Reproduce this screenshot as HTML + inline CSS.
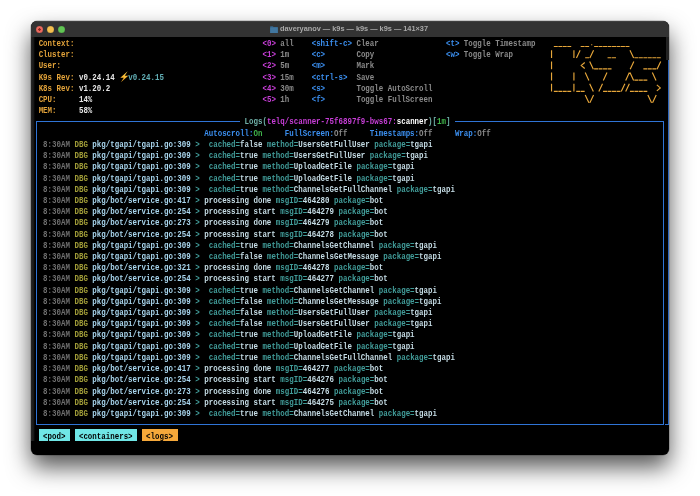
<!DOCTYPE html>
<html><head><meta charset="utf-8"><style>
html,body{margin:0;padding:0;width:700px;height:496px;overflow:hidden;background:#ffffff;}
body{position:relative;font-family:"Liberation Mono",monospace;}
#win{position:absolute;left:31px;top:21px;width:638px;height:433.5px;border-radius:6px;background:#000;
 box-shadow:0 0 0 0.5px rgba(0,0,0,0.3), 0 12px 23px rgba(0,0,0,0.68);overflow:hidden;}
#tb{position:absolute;left:0;top:0;width:638px;height:16px;background:#333333;box-shadow:inset 0 0.6px 0 rgba(255,255,255,0.12);}
.dot{position:absolute;top:4.9px;width:7px;height:7px;border-radius:50%;}
#title{position:absolute;left:249.2px;top:0;height:16px;line-height:16px;white-space:nowrap;color:#a9a9a9;
 font-family:"Liberation Sans",sans-serif;font-size:7.35px;font-weight:bold;will-change:transform;}
#txt{position:absolute;left:0;top:0;width:700px;height:496px;will-change:transform;}
.t{position:absolute;white-space:pre;height:11.20px;line-height:11.20px;font-size:7.46px;font-weight:bold;letter-spacing:0.000px;transform:scaleY(1.160);transform-origin:0 7.00px;}
.ln{position:absolute;}
.org{color:#e3a33a}
.wht{color:#e6e6e6}
.gry{color:#8a8a8a}
.mag{color:#c83ed8}
.blu{color:#3b8ff0}
.teal{color:#419c99}
.grn{color:#3fb34a}
.dbg{color:#a09c38}
.path{color:#a9d6ee}
.logo{color:#e3a33a}
.ts{color:#707070}
.ver{color:#62afb6}
.lgt{color:#6fb0a8}
.msg{color:#c4dbe4}
.blk{color:#000000}
.whb{color:#ffffff}
</style></head><body>
<div id="win">
<div id="tb"></div>
<div class="dot" style="left:4.8px;background:radial-gradient(circle at 50% 50%,#8c2a22 0,#8c2a22 1px,#ec6a5f 1.5px);box-shadow:inset 0 0 0 0.5px rgba(0,0,0,0.15)"></div>
<div class="dot" style="left:15.8px;background:#f4bf4f;box-shadow:inset 0 0 0 0.5px rgba(0,0,0,0.15)"></div>
<div class="dot" style="left:26.8px;background:#61c554;box-shadow:inset 0 0 0 0.5px rgba(0,0,0,0.15)"></div>
<div id="title">daveryanov — k9s — k9s — k9s — 141×37</div>
<svg class="ln" style="left:238px;top:3px" width="10" height="10"><path d="M1.2 2.2 h2.6 l0.8 0.9 h4.2 v6 h-7.6 z" fill="#35658c"/><path d="M1.2 3.6 h7.6 v5.5 h-7.6 z" fill="#41769f"/></svg>
</div>
<div class="ln" style="left:38.84px;top:429.20px;width:31.33px;height:11.60px;background:#6fe6e6"></div>
<div class="ln" style="left:74.64px;top:429.20px;width:62.66px;height:11.60px;background:#6fe6e6"></div>
<div class="ln" style="left:141.78px;top:429.20px;width:35.81px;height:11.60px;background:#f5a83a"></div>
<div class="ln" style="left:36.10px;top:121.00px;width:204.16px;height:1.00px;background:#2f74d6"></div>
<div class="ln" style="left:455.10px;top:121.00px;width:208.63px;height:1.00px;background:#2f74d6"></div>
<div class="ln" style="left:36.10px;top:423.60px;width:627.64px;height:1.00px;background:#2f74d6"></div>
<div class="ln" style="left:36.10px;top:121.00px;width:1.00px;height:303.60px;background:#2f74d6"></div>
<div class="ln" style="left:662.74px;top:121.00px;width:1.00px;height:303.60px;background:#2f74d6"></div>
<div class="ln" style="left:31px;top:37px;width:4px;height:404px;background:linear-gradient(90deg,#262626,#1a1a1a 60%,#000)"></div>
<div class="ln" style="left:666.00px;top:37.00px;width:3.00px;height:22.90px;background:#222222"></div>
<div class="ln" style="left:667.80px;top:59.90px;width:1.20px;height:364.70px;background:#2d66bd"></div>
<div class="ln" style="left:665.40px;top:423.60px;width:3.50px;height:1.00px;background:#2f74d6"></div>
<svg class="ln" style="left:0;top:0" width="700" height="496"><path d="M553.83 46.50H557.80M558.30 46.50H562.28M562.78 46.50H566.75M567.25 46.50H571.23M580.68 46.50H584.66M585.16 46.50H589.13M591.17 44.70h1.1M594.11 46.50H598.09M598.59 46.50H602.56M603.06 46.50H607.04M607.54 46.50H611.51M612.01 46.50H615.99M616.49 46.50H620.47M620.97 46.50H624.94M625.44 46.50H629.42M551.54 50.20V58.00M573.92 50.20V58.00M576.46 58.00L580.13 50.20M585.16 57.70H589.13M589.88 58.00L593.56 50.20M607.54 57.70H611.51M612.01 57.70H615.99M629.97 50.20L633.64 58.00M634.39 57.70H638.37M638.87 57.70H642.85M643.35 57.70H647.32M647.82 57.70H651.80M652.30 57.70H656.27M656.77 57.70H660.75M551.54 61.40V69.20M584.73 62.50L581.23 65.50L584.73 68.50M589.68 61.40L593.36 69.20M594.11 68.90H598.09M598.59 68.90H602.56M603.06 68.90H607.04M607.54 68.90H611.51M630.17 69.20L633.84 61.40M643.35 68.90H647.32M647.82 68.90H651.80M652.30 68.90H656.27M657.02 69.20L660.70 61.40M551.54 72.60V80.40M573.92 72.60V80.40M585.21 72.60L588.88 80.40M603.31 80.40L606.99 72.60M625.69 80.40L629.37 72.60M629.97 72.60L633.64 80.40M634.39 80.10H638.37M638.87 80.10H642.85M643.35 80.10H647.32M652.35 72.60L656.02 80.40M551.54 83.80V91.60M553.83 91.30H557.80M558.30 91.30H562.28M562.78 91.30H566.75M567.25 91.30H571.23M573.92 83.80V91.60M576.21 91.30H580.18M580.68 91.30H584.66M589.68 83.80L593.36 91.60M598.84 91.60L602.51 83.80M603.06 91.30H607.04M607.54 91.30H611.51M612.01 91.30H615.99M616.49 91.30H620.47M621.22 91.60L624.89 83.80M625.69 91.60L629.37 83.80M629.92 91.30H633.89M634.39 91.30H638.37M638.87 91.30H642.85M643.35 91.30H647.32M656.82 84.90L660.32 87.90L656.82 90.90M585.21 95.00L588.88 102.80M589.88 102.80L593.56 95.00M647.87 95.00L651.55 102.80M652.55 102.80L656.22 95.00" stroke="#e6a63a" stroke-width="1.15" fill="none"/></svg>
<div id="txt">
<div class="t org" style="left:38.64px;top:39.00px">Context:</div>
<div class="t org" style="left:38.64px;top:50.00px">Cluster:</div>
<div class="t org" style="left:38.64px;top:61.00px">User:</div>
<div class="t org" style="left:38.64px;top:73.00px">K9s Rev:</div>
<div class="t wht" style="left:78.92px;top:73.00px">v0.24.14</div>
<div class="t org" style="left:38.64px;top:84.00px">K8s Rev:</div>
<div class="t wht" style="left:78.92px;top:84.00px">v1.20.2</div>
<div class="t org" style="left:38.64px;top:95.00px">CPU:</div>
<div class="t wht" style="left:78.92px;top:95.00px">14%</div>
<div class="t org" style="left:38.64px;top:106.00px">MEM:</div>
<div class="t wht" style="left:78.92px;top:106.00px">58%</div>
<div class="t ver" style="left:128.16px;top:73.00px">v0.24.15</div>
<div class="t mag" style="left:262.44px;top:39.00px">&lt;0&gt;</div>
<div class="t gry" style="left:280.34px;top:39.00px">all</div>
<div class="t mag" style="left:262.44px;top:50.00px">&lt;1&gt;</div>
<div class="t gry" style="left:280.34px;top:50.00px">1m</div>
<div class="t mag" style="left:262.44px;top:61.00px">&lt;2&gt;</div>
<div class="t gry" style="left:280.34px;top:61.00px">5m</div>
<div class="t mag" style="left:262.44px;top:73.00px">&lt;3&gt;</div>
<div class="t gry" style="left:280.34px;top:73.00px">15m</div>
<div class="t mag" style="left:262.44px;top:84.00px">&lt;4&gt;</div>
<div class="t gry" style="left:280.34px;top:84.00px">30m</div>
<div class="t mag" style="left:262.44px;top:95.00px">&lt;5&gt;</div>
<div class="t gry" style="left:280.34px;top:95.00px">1h</div>
<div class="t blu" style="left:311.67px;top:39.00px">&lt;shift-c&gt;</div>
<div class="t gry" style="left:356.43px;top:39.00px">Clear</div>
<div class="t blu" style="left:311.67px;top:50.00px">&lt;c&gt;</div>
<div class="t gry" style="left:356.43px;top:50.00px">Copy</div>
<div class="t blu" style="left:311.67px;top:61.00px">&lt;m&gt;</div>
<div class="t gry" style="left:356.43px;top:61.00px">Mark</div>
<div class="t blu" style="left:311.67px;top:73.00px">&lt;ctrl-s&gt;</div>
<div class="t gry" style="left:356.43px;top:73.00px">Save</div>
<div class="t blu" style="left:311.67px;top:84.00px">&lt;s&gt;</div>
<div class="t gry" style="left:356.43px;top:84.00px">Toggle AutoScroll</div>
<div class="t blu" style="left:311.67px;top:95.00px">&lt;f&gt;</div>
<div class="t gry" style="left:356.43px;top:95.00px">Toggle FullScreen</div>
<div class="t blu" style="left:445.95px;top:39.00px">&lt;t&gt;</div>
<div class="t gry" style="left:463.86px;top:39.00px">Toggle Timestamp</div>
<div class="t blu" style="left:445.95px;top:50.00px">&lt;w&gt;</div>
<div class="t gry" style="left:463.86px;top:50.00px">Toggle Wrap</div>
<div class="t ts" style="left:43.11px;top:140.00px">8:30AM</div>
<div class="t dbg" style="left:74.44px;top:140.00px">DBG</div>
<div class="t path" style="left:92.35px;top:140.00px">pkg/tgapi/tgapi.go:309</div>
<div class="t teal" style="left:195.30px;top:140.00px">&gt;</div>
<div class="t teal" style="left:208.72px;top:140.00px">cached=</div>
<div class="t msg" style="left:240.06px;top:140.00px">false</div>
<div class="t teal" style="left:266.91px;top:140.00px">method=</div>
<div class="t msg" style="left:298.24px;top:140.00px">UsersGetFullUser</div>
<div class="t teal" style="left:374.34px;top:140.00px">package=</div>
<div class="t msg" style="left:410.14px;top:140.00px">tgapi</div>
<div class="t ts" style="left:43.11px;top:151.00px">8:30AM</div>
<div class="t dbg" style="left:74.44px;top:151.00px">DBG</div>
<div class="t path" style="left:92.35px;top:151.00px">pkg/tgapi/tgapi.go:309</div>
<div class="t teal" style="left:195.30px;top:151.00px">&gt;</div>
<div class="t teal" style="left:208.72px;top:151.00px">cached=</div>
<div class="t msg" style="left:240.06px;top:151.00px">true</div>
<div class="t teal" style="left:262.44px;top:151.00px">method=</div>
<div class="t msg" style="left:293.77px;top:151.00px">UsersGetFullUser</div>
<div class="t teal" style="left:369.86px;top:151.00px">package=</div>
<div class="t msg" style="left:405.67px;top:151.00px">tgapi</div>
<div class="t ts" style="left:43.11px;top:162.00px">8:30AM</div>
<div class="t dbg" style="left:74.44px;top:162.00px">DBG</div>
<div class="t path" style="left:92.35px;top:162.00px">pkg/tgapi/tgapi.go:309</div>
<div class="t teal" style="left:195.30px;top:162.00px">&gt;</div>
<div class="t teal" style="left:208.72px;top:162.00px">cached=</div>
<div class="t msg" style="left:240.06px;top:162.00px">true</div>
<div class="t teal" style="left:262.44px;top:162.00px">method=</div>
<div class="t msg" style="left:293.77px;top:162.00px">UploadGetFile</div>
<div class="t teal" style="left:356.43px;top:162.00px">package=</div>
<div class="t msg" style="left:392.24px;top:162.00px">tgapi</div>
<div class="t ts" style="left:43.11px;top:174.00px">8:30AM</div>
<div class="t dbg" style="left:74.44px;top:174.00px">DBG</div>
<div class="t path" style="left:92.35px;top:174.00px">pkg/tgapi/tgapi.go:309</div>
<div class="t teal" style="left:195.30px;top:174.00px">&gt;</div>
<div class="t teal" style="left:208.72px;top:174.00px">cached=</div>
<div class="t msg" style="left:240.06px;top:174.00px">true</div>
<div class="t teal" style="left:262.44px;top:174.00px">method=</div>
<div class="t msg" style="left:293.77px;top:174.00px">UploadGetFile</div>
<div class="t teal" style="left:356.43px;top:174.00px">package=</div>
<div class="t msg" style="left:392.24px;top:174.00px">tgapi</div>
<div class="t ts" style="left:43.11px;top:185.00px">8:30AM</div>
<div class="t dbg" style="left:74.44px;top:185.00px">DBG</div>
<div class="t path" style="left:92.35px;top:185.00px">pkg/tgapi/tgapi.go:309</div>
<div class="t teal" style="left:195.30px;top:185.00px">&gt;</div>
<div class="t teal" style="left:208.72px;top:185.00px">cached=</div>
<div class="t msg" style="left:240.06px;top:185.00px">true</div>
<div class="t teal" style="left:262.44px;top:185.00px">method=</div>
<div class="t msg" style="left:293.77px;top:185.00px">ChannelsGetFullChannel</div>
<div class="t teal" style="left:396.72px;top:185.00px">package=</div>
<div class="t msg" style="left:432.52px;top:185.00px">tgapi</div>
<div class="t ts" style="left:43.11px;top:196.00px">8:30AM</div>
<div class="t dbg" style="left:74.44px;top:196.00px">DBG</div>
<div class="t path" style="left:92.35px;top:196.00px">pkg/bot/service.go:417</div>
<div class="t teal" style="left:195.30px;top:196.00px">&gt;</div>
<div class="t msg" style="left:204.25px;top:196.00px">processing done</div>
<div class="t teal" style="left:275.86px;top:196.00px">msgID=</div>
<div class="t msg" style="left:302.72px;top:196.00px">464280</div>
<div class="t teal" style="left:334.05px;top:196.00px">package=</div>
<div class="t msg" style="left:369.86px;top:196.00px">bot</div>
<div class="t ts" style="left:43.11px;top:207.00px">8:30AM</div>
<div class="t dbg" style="left:74.44px;top:207.00px">DBG</div>
<div class="t path" style="left:92.35px;top:207.00px">pkg/bot/service.go:254</div>
<div class="t teal" style="left:195.30px;top:207.00px">&gt;</div>
<div class="t msg" style="left:204.25px;top:207.00px">processing start</div>
<div class="t teal" style="left:280.34px;top:207.00px">msgID=</div>
<div class="t msg" style="left:307.20px;top:207.00px">464279</div>
<div class="t teal" style="left:338.53px;top:207.00px">package=</div>
<div class="t msg" style="left:374.34px;top:207.00px">bot</div>
<div class="t ts" style="left:43.11px;top:218.00px">8:30AM</div>
<div class="t dbg" style="left:74.44px;top:218.00px">DBG</div>
<div class="t path" style="left:92.35px;top:218.00px">pkg/bot/service.go:273</div>
<div class="t teal" style="left:195.30px;top:218.00px">&gt;</div>
<div class="t msg" style="left:204.25px;top:218.00px">processing done</div>
<div class="t teal" style="left:275.86px;top:218.00px">msgID=</div>
<div class="t msg" style="left:302.72px;top:218.00px">464279</div>
<div class="t teal" style="left:334.05px;top:218.00px">package=</div>
<div class="t msg" style="left:369.86px;top:218.00px">bot</div>
<div class="t ts" style="left:43.11px;top:230.00px">8:30AM</div>
<div class="t dbg" style="left:74.44px;top:230.00px">DBG</div>
<div class="t path" style="left:92.35px;top:230.00px">pkg/bot/service.go:254</div>
<div class="t teal" style="left:195.30px;top:230.00px">&gt;</div>
<div class="t msg" style="left:204.25px;top:230.00px">processing start</div>
<div class="t teal" style="left:280.34px;top:230.00px">msgID=</div>
<div class="t msg" style="left:307.20px;top:230.00px">464278</div>
<div class="t teal" style="left:338.53px;top:230.00px">package=</div>
<div class="t msg" style="left:374.34px;top:230.00px">bot</div>
<div class="t ts" style="left:43.11px;top:241.00px">8:30AM</div>
<div class="t dbg" style="left:74.44px;top:241.00px">DBG</div>
<div class="t path" style="left:92.35px;top:241.00px">pkg/tgapi/tgapi.go:309</div>
<div class="t teal" style="left:195.30px;top:241.00px">&gt;</div>
<div class="t teal" style="left:208.72px;top:241.00px">cached=</div>
<div class="t msg" style="left:240.06px;top:241.00px">true</div>
<div class="t teal" style="left:262.44px;top:241.00px">method=</div>
<div class="t msg" style="left:293.77px;top:241.00px">ChannelsGetChannel</div>
<div class="t teal" style="left:378.81px;top:241.00px">package=</div>
<div class="t msg" style="left:414.62px;top:241.00px">tgapi</div>
<div class="t ts" style="left:43.11px;top:252.00px">8:30AM</div>
<div class="t dbg" style="left:74.44px;top:252.00px">DBG</div>
<div class="t path" style="left:92.35px;top:252.00px">pkg/tgapi/tgapi.go:309</div>
<div class="t teal" style="left:195.30px;top:252.00px">&gt;</div>
<div class="t teal" style="left:208.72px;top:252.00px">cached=</div>
<div class="t msg" style="left:240.06px;top:252.00px">false</div>
<div class="t teal" style="left:266.91px;top:252.00px">method=</div>
<div class="t msg" style="left:298.24px;top:252.00px">ChannelsGetMessage</div>
<div class="t teal" style="left:383.29px;top:252.00px">package=</div>
<div class="t msg" style="left:419.10px;top:252.00px">tgapi</div>
<div class="t ts" style="left:43.11px;top:263.00px">8:30AM</div>
<div class="t dbg" style="left:74.44px;top:263.00px">DBG</div>
<div class="t path" style="left:92.35px;top:263.00px">pkg/bot/service.go:321</div>
<div class="t teal" style="left:195.30px;top:263.00px">&gt;</div>
<div class="t msg" style="left:204.25px;top:263.00px">processing done</div>
<div class="t teal" style="left:275.86px;top:263.00px">msgID=</div>
<div class="t msg" style="left:302.72px;top:263.00px">464278</div>
<div class="t teal" style="left:334.05px;top:263.00px">package=</div>
<div class="t msg" style="left:369.86px;top:263.00px">bot</div>
<div class="t ts" style="left:43.11px;top:274.00px">8:30AM</div>
<div class="t dbg" style="left:74.44px;top:274.00px">DBG</div>
<div class="t path" style="left:92.35px;top:274.00px">pkg/bot/service.go:254</div>
<div class="t teal" style="left:195.30px;top:274.00px">&gt;</div>
<div class="t msg" style="left:204.25px;top:274.00px">processing start</div>
<div class="t teal" style="left:280.34px;top:274.00px">msgID=</div>
<div class="t msg" style="left:307.20px;top:274.00px">464277</div>
<div class="t teal" style="left:338.53px;top:274.00px">package=</div>
<div class="t msg" style="left:374.34px;top:274.00px">bot</div>
<div class="t ts" style="left:43.11px;top:286.00px">8:30AM</div>
<div class="t dbg" style="left:74.44px;top:286.00px">DBG</div>
<div class="t path" style="left:92.35px;top:286.00px">pkg/tgapi/tgapi.go:309</div>
<div class="t teal" style="left:195.30px;top:286.00px">&gt;</div>
<div class="t teal" style="left:208.72px;top:286.00px">cached=</div>
<div class="t msg" style="left:240.06px;top:286.00px">true</div>
<div class="t teal" style="left:262.44px;top:286.00px">method=</div>
<div class="t msg" style="left:293.77px;top:286.00px">ChannelsGetChannel</div>
<div class="t teal" style="left:378.81px;top:286.00px">package=</div>
<div class="t msg" style="left:414.62px;top:286.00px">tgapi</div>
<div class="t ts" style="left:43.11px;top:297.00px">8:30AM</div>
<div class="t dbg" style="left:74.44px;top:297.00px">DBG</div>
<div class="t path" style="left:92.35px;top:297.00px">pkg/tgapi/tgapi.go:309</div>
<div class="t teal" style="left:195.30px;top:297.00px">&gt;</div>
<div class="t teal" style="left:208.72px;top:297.00px">cached=</div>
<div class="t msg" style="left:240.06px;top:297.00px">false</div>
<div class="t teal" style="left:266.91px;top:297.00px">method=</div>
<div class="t msg" style="left:298.24px;top:297.00px">ChannelsGetMessage</div>
<div class="t teal" style="left:383.29px;top:297.00px">package=</div>
<div class="t msg" style="left:419.10px;top:297.00px">tgapi</div>
<div class="t ts" style="left:43.11px;top:308.00px">8:30AM</div>
<div class="t dbg" style="left:74.44px;top:308.00px">DBG</div>
<div class="t path" style="left:92.35px;top:308.00px">pkg/tgapi/tgapi.go:309</div>
<div class="t teal" style="left:195.30px;top:308.00px">&gt;</div>
<div class="t teal" style="left:208.72px;top:308.00px">cached=</div>
<div class="t msg" style="left:240.06px;top:308.00px">false</div>
<div class="t teal" style="left:266.91px;top:308.00px">method=</div>
<div class="t msg" style="left:298.24px;top:308.00px">UsersGetFullUser</div>
<div class="t teal" style="left:374.34px;top:308.00px">package=</div>
<div class="t msg" style="left:410.14px;top:308.00px">tgapi</div>
<div class="t ts" style="left:43.11px;top:319.00px">8:30AM</div>
<div class="t dbg" style="left:74.44px;top:319.00px">DBG</div>
<div class="t path" style="left:92.35px;top:319.00px">pkg/tgapi/tgapi.go:309</div>
<div class="t teal" style="left:195.30px;top:319.00px">&gt;</div>
<div class="t teal" style="left:208.72px;top:319.00px">cached=</div>
<div class="t msg" style="left:240.06px;top:319.00px">false</div>
<div class="t teal" style="left:266.91px;top:319.00px">method=</div>
<div class="t msg" style="left:298.24px;top:319.00px">UsersGetFullUser</div>
<div class="t teal" style="left:374.34px;top:319.00px">package=</div>
<div class="t msg" style="left:410.14px;top:319.00px">tgapi</div>
<div class="t ts" style="left:43.11px;top:330.00px">8:30AM</div>
<div class="t dbg" style="left:74.44px;top:330.00px">DBG</div>
<div class="t path" style="left:92.35px;top:330.00px">pkg/tgapi/tgapi.go:309</div>
<div class="t teal" style="left:195.30px;top:330.00px">&gt;</div>
<div class="t teal" style="left:208.72px;top:330.00px">cached=</div>
<div class="t msg" style="left:240.06px;top:330.00px">true</div>
<div class="t teal" style="left:262.44px;top:330.00px">method=</div>
<div class="t msg" style="left:293.77px;top:330.00px">UploadGetFile</div>
<div class="t teal" style="left:356.43px;top:330.00px">package=</div>
<div class="t msg" style="left:392.24px;top:330.00px">tgapi</div>
<div class="t ts" style="left:43.11px;top:342.00px">8:30AM</div>
<div class="t dbg" style="left:74.44px;top:342.00px">DBG</div>
<div class="t path" style="left:92.35px;top:342.00px">pkg/tgapi/tgapi.go:309</div>
<div class="t teal" style="left:195.30px;top:342.00px">&gt;</div>
<div class="t teal" style="left:208.72px;top:342.00px">cached=</div>
<div class="t msg" style="left:240.06px;top:342.00px">true</div>
<div class="t teal" style="left:262.44px;top:342.00px">method=</div>
<div class="t msg" style="left:293.77px;top:342.00px">UploadGetFile</div>
<div class="t teal" style="left:356.43px;top:342.00px">package=</div>
<div class="t msg" style="left:392.24px;top:342.00px">tgapi</div>
<div class="t ts" style="left:43.11px;top:353.00px">8:30AM</div>
<div class="t dbg" style="left:74.44px;top:353.00px">DBG</div>
<div class="t path" style="left:92.35px;top:353.00px">pkg/tgapi/tgapi.go:309</div>
<div class="t teal" style="left:195.30px;top:353.00px">&gt;</div>
<div class="t teal" style="left:208.72px;top:353.00px">cached=</div>
<div class="t msg" style="left:240.06px;top:353.00px">true</div>
<div class="t teal" style="left:262.44px;top:353.00px">method=</div>
<div class="t msg" style="left:293.77px;top:353.00px">ChannelsGetFullChannel</div>
<div class="t teal" style="left:396.72px;top:353.00px">package=</div>
<div class="t msg" style="left:432.52px;top:353.00px">tgapi</div>
<div class="t ts" style="left:43.11px;top:364.00px">8:30AM</div>
<div class="t dbg" style="left:74.44px;top:364.00px">DBG</div>
<div class="t path" style="left:92.35px;top:364.00px">pkg/bot/service.go:417</div>
<div class="t teal" style="left:195.30px;top:364.00px">&gt;</div>
<div class="t msg" style="left:204.25px;top:364.00px">processing done</div>
<div class="t teal" style="left:275.86px;top:364.00px">msgID=</div>
<div class="t msg" style="left:302.72px;top:364.00px">464277</div>
<div class="t teal" style="left:334.05px;top:364.00px">package=</div>
<div class="t msg" style="left:369.86px;top:364.00px">bot</div>
<div class="t ts" style="left:43.11px;top:375.00px">8:30AM</div>
<div class="t dbg" style="left:74.44px;top:375.00px">DBG</div>
<div class="t path" style="left:92.35px;top:375.00px">pkg/bot/service.go:254</div>
<div class="t teal" style="left:195.30px;top:375.00px">&gt;</div>
<div class="t msg" style="left:204.25px;top:375.00px">processing start</div>
<div class="t teal" style="left:280.34px;top:375.00px">msgID=</div>
<div class="t msg" style="left:307.20px;top:375.00px">464276</div>
<div class="t teal" style="left:338.53px;top:375.00px">package=</div>
<div class="t msg" style="left:374.34px;top:375.00px">bot</div>
<div class="t ts" style="left:43.11px;top:387.00px">8:30AM</div>
<div class="t dbg" style="left:74.44px;top:387.00px">DBG</div>
<div class="t path" style="left:92.35px;top:387.00px">pkg/bot/service.go:273</div>
<div class="t teal" style="left:195.30px;top:387.00px">&gt;</div>
<div class="t msg" style="left:204.25px;top:387.00px">processing done</div>
<div class="t teal" style="left:275.86px;top:387.00px">msgID=</div>
<div class="t msg" style="left:302.72px;top:387.00px">464276</div>
<div class="t teal" style="left:334.05px;top:387.00px">package=</div>
<div class="t msg" style="left:369.86px;top:387.00px">bot</div>
<div class="t ts" style="left:43.11px;top:398.00px">8:30AM</div>
<div class="t dbg" style="left:74.44px;top:398.00px">DBG</div>
<div class="t path" style="left:92.35px;top:398.00px">pkg/bot/service.go:254</div>
<div class="t teal" style="left:195.30px;top:398.00px">&gt;</div>
<div class="t msg" style="left:204.25px;top:398.00px">processing start</div>
<div class="t teal" style="left:280.34px;top:398.00px">msgID=</div>
<div class="t msg" style="left:307.20px;top:398.00px">464275</div>
<div class="t teal" style="left:338.53px;top:398.00px">package=</div>
<div class="t msg" style="left:374.34px;top:398.00px">bot</div>
<div class="t ts" style="left:43.11px;top:409.00px">8:30AM</div>
<div class="t dbg" style="left:74.44px;top:409.00px">DBG</div>
<div class="t path" style="left:92.35px;top:409.00px">pkg/tgapi/tgapi.go:309</div>
<div class="t teal" style="left:195.30px;top:409.00px">&gt;</div>
<div class="t teal" style="left:208.72px;top:409.00px">cached=</div>
<div class="t msg" style="left:240.06px;top:409.00px">true</div>
<div class="t teal" style="left:262.44px;top:409.00px">method=</div>
<div class="t msg" style="left:293.77px;top:409.00px">ChannelsGetChannel</div>
<div class="t teal" style="left:378.81px;top:409.00px">package=</div>
<div class="t msg" style="left:414.62px;top:409.00px">tgapi</div>
<div class="t lgt" style="left:244.53px;top:117.00px">Logs</div>
<div class="t lgt" style="left:262.44px;top:117.00px">(</div>
<div class="t mag" style="left:266.91px;top:117.00px">telq/scanner-75f6897f9-bws67</div>
<div class="t mag" style="left:392.24px;top:117.00px">:</div>
<div class="t whb" style="left:396.72px;top:117.00px">scanner</div>
<div class="t lgt" style="left:428.05px;top:117.00px">)</div>
<div class="t lgt" style="left:432.52px;top:117.00px">[</div>
<div class="t grn" style="left:437.00px;top:117.00px">1m</div>
<div class="t lgt" style="left:445.95px;top:117.00px">]</div>
<div class="t blu" style="left:204.25px;top:129.00px">Autoscroll:</div>
<div class="t grn" style="left:253.48px;top:129.00px">On</div>
<div class="t blu" style="left:284.82px;top:129.00px">FullScreen:</div>
<div class="t gry" style="left:334.05px;top:129.00px">Off</div>
<div class="t blu" style="left:369.86px;top:129.00px">Timestamps:</div>
<div class="t gry" style="left:419.10px;top:129.00px">Off</div>
<div class="t blu" style="left:454.90px;top:129.00px">Wrap:</div>
<div class="t gry" style="left:477.28px;top:129.00px">Off</div>
<div class="t blk" style="left:43.11px;top:432.00px">&lt;pod&gt;</div>
<div class="t blk" style="left:78.92px;top:432.00px">&lt;containers&gt;</div>
<div class="t blk" style="left:146.06px;top:432.00px">&lt;logs&gt;</div>
<svg class="ln" style="left:0;top:0" width="700" height="496"><defs><linearGradient id="bg1" x1="0" y1="0" x2="0" y2="1"><stop offset="0" stop-color="#ffd54a"/><stop offset="1" stop-color="#f0a020"/></linearGradient></defs><polygon points="127.6,71.3 120.3,77.7 123.8,77.7 120.9,82.3 128.3,75.7 124.8,75.7" fill="url(#bg1)"/></svg>
</div></body></html>
